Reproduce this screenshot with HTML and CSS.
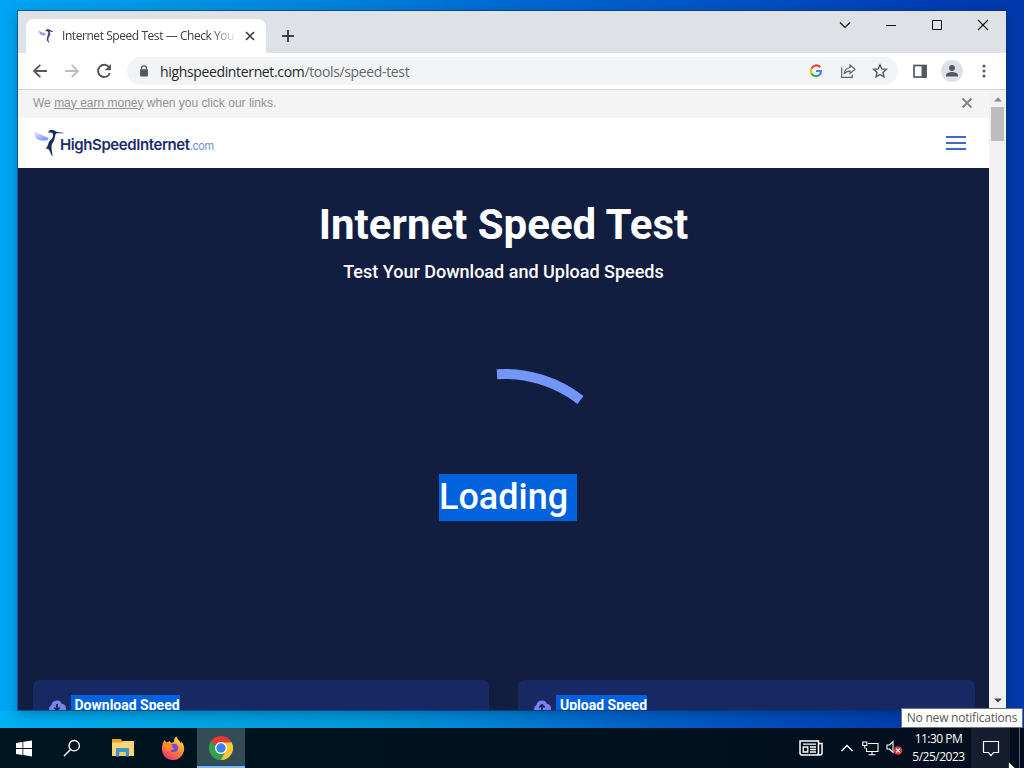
FILE: index.html
```html
<!DOCTYPE html>
<html lang="en">
<head>
	<meta charset="utf-8">
	<title>Internet Speed Test</title>
	<link rel="stylesheet" href="styles.css">
</head>
<body>
<div class="desktop">

	<div class="window">
		<div class="tabstrip">
			<div class="tab">
				<svg class="favicon" width="16" height="16" viewBox="0 0 16 16"><path d="M1 2.500c2 2 4 1.500 7 3L7 7.500c-3 .5-6-1-6-5z" fill="#9fa2ea"/><path d="M7.500 3c1-2 3-2 4-1l3.500 1.500-3-.2c-1 1.200 1 3.200-1 5.200-1 2-1.500 3 0 6-2-1.500-2.500-3.500-1.500-5.500C10 6.500 11 5 10 3.500c-1-1-2-.8-2.500-.5z" fill="#343b72" stroke="#343b72" stroke-width=".5"/></svg>
				<span class="tab-title">Internet Speed Test — Check You</span>
				<svg class="tab-close" width="10" height="10" viewBox="0 0 10 10"><path d="M1 1l8 8M9 1l-8 8" stroke="#3c4043" stroke-width="1.7"/></svg>
			</div>
			<svg class="newtab" width="14" height="14" viewBox="0 0 14 14"><path d="M7 1v12M1 7h12" stroke="#3c4043" stroke-width="1.9"/></svg>
			<div class="win-buttons">
				<svg width="12" height="12" viewBox="0 0 12 12"><path d="M1 3.500l5 5 5-5" fill="none" stroke="#111" stroke-width="1.200"/></svg>
				<svg width="12" height="12" viewBox="0 0 12 12"><path d="M1 6.500h10" stroke="#111"/></svg>
				<svg width="12" height="12" viewBox="0 0 12 12"><path d="M1.500 1.500h9v9h-9z" fill="none" stroke="#111"/></svg>
				<svg width="12" height="12" viewBox="0 0 12 12"><path d="M1 1l10 10M11 1L1 11" stroke="#111" stroke-width="1.100"/></svg>
			</div>
		</div>

		<div class="toolbar">
			<svg class="nav" width="16" height="16" viewBox="0 0 16 16"><path d="M15 8H2.500M8.300 1.800L2 8l6.300 6.200" fill="none" stroke="#54585c" stroke-width="1.800"/></svg>
			<svg class="nav" width="16" height="16" viewBox="0 0 16 16"><path d="M1 8h12.500M7.700 1.800L14 8l-6.300 6.200" fill="none" stroke="#babcbe" stroke-width="1.800"/></svg>
			<svg class="nav" width="16" height="16" viewBox="0 0 16 16"><path d="M13 4.200A6.100 6.100 0 1 0 13.900 10" fill="none" stroke="#54585c" stroke-width="2"/><path d="M15 1v6.300H8.700z" fill="#54585c"/></svg>
			<div class="omnibox">
				<svg class="lock" width="10" height="12" viewBox="0 0 10 12"><path d="M2.500 5V3.300a2.500 2.500 0 0 1 5 0V5" fill="none" stroke="#54585c" stroke-width="1.300"/><rect x="1" y="4.300" width="8" height="7.200" rx="1" fill="#54585c"/></svg>
				<span class="url">highspeedinternet.com<span>/tools/speed-test</span></span>
				<svg class="obicon" width="16" height="16" viewBox="0 0 16 16"><g fill="none" stroke-width="2.200"><path d="M12.200 4.200A5.200 5.200 0 0 0 3.500 5.600" stroke="#ea4335"/><path d="M3.500 5.600a5.200 5.200 0 0 0 0 4.800" stroke="#fbbc05"/><path d="M3.500 10.400a5.200 5.200 0 0 0 7.800 1.600" stroke="#34a853"/><path d="M11.300 12A5.200 5.200 0 0 0 13 8H8" stroke="#4285f4"/></g></svg>
				<svg class="obicon" width="16" height="16" viewBox="0 0 16 16"><g fill="none" stroke="#5f6368" stroke-width="1.200"><path d="M1.700 4.500v9.800h10.600v-2.500"/><path d="M10 2l5 4.300-5 4.200V8.100C7.300 8 5.500 9 4.100 11 4.500 7.700 6.500 5 10 4.500z"/></g></svg>
				<svg class="obicon" width="16" height="16" viewBox="0 0 16 16"><path d="M8 1.900l1.850 4.050 4.450.45-3.300 3 .95 4.350L8 11.500l-3.950 2.250L5 9.400l-3.300-3 4.450-.45z" fill="none" stroke="#54585c" stroke-width="1.400"/></svg>
			</div>
			<svg class="panel-icon" width="16" height="16" viewBox="0 0 16 16"><rect x="2" y="2.500" width="12" height="11.500" fill="none" stroke="#54585c" stroke-width="1.700"/><path d="M9.500 2h5v13h-5z" fill="#54585c"/></svg>
			<span class="avatar"><svg width="14" height="14" viewBox="0 0 14 14"><circle cx="7" cy="4" r="2.900" fill="#545866"/><path d="M1 12.500V11c0-2 3.500-3 6-3s6 1 6 3v1.500z" fill="#545866"/></svg></span>
			<svg class="more" width="4" height="14" viewBox="0 0 4 14"><g fill="#54585c"><circle cx="2" cy="2" r="1.500"/><circle cx="2" cy="7" r="1.500"/><circle cx="2" cy="12" r="1.500"/></g></svg>
		</div>

		<div class="viewport">
			<div class="page">
				<div class="notice">
					<span>We <u>may earn money</u> when you click our links.</span>
					<svg width="12" height="12" viewBox="0 0 12 12"><path d="M1.500 1.500l9 9M10.500 1.500l-9 9" stroke="#888" stroke-width="2"/></svg>
				</div>
				<div class="site-header">
					<div class="logo">
						<svg width="32" height="30" viewBox="0 0 32 30"><defs><linearGradient id="wing" x1="0" y1="0" x2=".7" y2="1"><stop offset="0" stop-color="#eef1ff"/><stop offset="1" stop-color="#7b97f6"/></linearGradient></defs><path d="M1.500 2.500c2 3.500 7 3.500 14 7.500l-.5 1.800c-3 1.600-9 1-11.500-1.300C1.500 8.500 1.500 6 1.500 2.500z" fill="url(#wing)"/><path d="M15 4.600C16 1.500 19.500.8 22 3c2 1.200 5 1.200 9.500 1.900-3 .3-6 .2-8 .4-1.600 1.200-1.200 3.500-2 6-.8 2.500-2.600 4-2.900 6.200-.3 3.500.8 7 .9 11.500-2-3.300-2.300-6-4.100-8l-2.700-.5c1.700-1.500 2.300-3.500 2.800-5.500.8-2.600 3.500-3.500 4.300-6 .7-2.300.2-3.800-1.200-4.200-1.200-.4-2.500-.4-3.600-.2z" fill="#1d2b63"/></svg>
						<div class="brand">HighSpeedInternet<span>.com</span></div>
					</div>
					<div class="burger"><i></i><i></i><i></i></div>
				</div>
				<div class="hero">
					<h1>Internet Speed Test</h1>
					<h2>Test Your Download and Upload Speeds</h2>
					<svg class="spinner" width="258" height="50" viewBox="0 0 258 50"><path d="M122 9.200A124 124 0 0 1 205.500 35" fill="none" stroke="#7396fb" stroke-width="10"/></svg>
					<div class="loading">Loading</div>
					<div class="cards">
						<div class="card">
							<svg width="18" height="15" viewBox="0 0 18 15"><path d="M4.500 13.500a4 4 0 0 1-1-7.600A5.500 5.500 0 0 1 14 5a4.300 4.300 0 0 1 .5 8.500z" fill="#7b83e8"/><path d="M9 5v6M6.300 8.500L9 11.300l2.700-2.800" fill="none" stroke="#1a2863" stroke-width="1.800"/></svg>
							<span>Download Speed</span>
						</div>
						<div class="card">
							<svg width="18" height="15" viewBox="0 0 18 15"><path d="M4.500 13.500a4 4 0 0 1-1-7.600A5.500 5.500 0 0 1 14 5a4.300 4.300 0 0 1 .5 8.500z" fill="#7b83e8"/><path d="M9 12V6M6.300 8.500L9 5.700l2.700 2.800" fill="none" stroke="#1a2863" stroke-width="1.800"/></svg>
							<span>Upload Speed</span>
						</div>
					</div>
				</div>
			</div>
			<div class="scrollbar">
				<svg width="8" height="5" viewBox="0 0 8 5"><path d="M0 4.500L4 .5l4 4z" fill="#868686"/></svg>
				<div class="thumb"></div>
				<svg class="down" width="8" height="5" viewBox="0 0 8 5"><path d="M0 .5l4 4 4-4z" fill="#4a4a4a"/></svg>
			</div>
		</div>
	</div>

	<div class="glow"></div>

	<div class="taskbar">
		<div class="task"><svg width="16" height="17" viewBox="0 0 16 17"><path d="M0 2.900l6.500-1V8H0zM7.300 1.800L16 .5V8H7.300zM0 8.900h6.500V15L0 14.100zM7.300 8.900H16v7.500l-8.700-1.300z" fill="#fff"/></svg></div>
		<div class="task"><svg width="18" height="18" viewBox="0 0 18 18"><circle cx="11.200" cy="6.700" r="5.200" fill="none" stroke="#fff" stroke-width="1.400"/><path d="M7.500 10.500L1 17" stroke="#fff" stroke-width="1.400"/></svg></div>
		<div class="task explorer"><svg width="24" height="20" viewBox="0 0 24 20"><path d="M1 1h9l1 2h11v4H1z" fill="#e2a42e"/><path d="M1 4.500h10l1.500-1.500H23v15H1z" fill="#fad475"/><path d="M5 18.500v-7.500q0-1 1-1h11q1 0 1 1v7.500h-3.500V14h-6v4.500z" fill="#3d95c6"/><path d="M8.500 14h6v4h-6z" fill="#f3cb68"/></svg></div>
		<div class="task"><svg width="24" height="24" viewBox="0 0 24 24"><defs><linearGradient id="fox" x1=".8" y1="0" x2=".3" y2="1"><stop offset="0" stop-color="#ffe14a"/><stop offset=".45" stop-color="#ff9632"/><stop offset="1" stop-color="#f5316b"/></linearGradient></defs><path d="M3.500 4l2 2.500L9 5l1 2 3-1c0-3 1-5 2.500-5.500.5 3 3.500 4 4.500 7l.5-2c3 4 3.500 8 1.500 12a11 11 0 0 1-20.500-1C0 12 1.500 7 3.500 4z" fill="url(#fox)"/><path d="M8 8.500c3 .5 4-1.500 7-.5 3 2 3 5.500.500 7.500-3.500 1.500-6.500.5-7.500-2l3 .5 2-2-4-.5z" fill="#7a4bc9"/><path d="M5.500 7l4.500 1.500 2 2.500-3.500 1.500 2 2.500c-4 1-7-3-5-8z" fill="#ff8a2a"/></svg></div>
		<div class="task active"><svg width="24" height="24" viewBox="0 0 24 24"><path d="M12 12L1.600 6A12 12 0 0 1 22.400 6z" fill="#e33b2e"/><path d="M12 12L22.400 6A12 12 0 0 1 12 24z" fill="#fcc934"/><path d="M12 12v12A12 12 0 0 1 1.600 6z" fill="#31a350"/><path d="M12 6.500h10.600L16.800 14.800z" fill="#fcc934"/><path d="M16.800 14.800L12 24l-1-6.500z" fill="#31a350"/><circle cx="12" cy="12" r="6" fill="#fff"/><circle cx="12" cy="12" r="4.700" fill="#4080ee"/></svg></div>
		<div class="tray">
			<svg class="news" width="24" height="16" viewBox="0 0 24 16"><g fill="none" stroke="#fff" stroke-width="1.500"><path d="M19.500 15H3a2 2 0 0 1-2-2V1h18.500v12.500M19.500 3.500H23V13a2 2 0 0 1-4 0"/><path d="M4.200 7h4.600v5H4.200zM4 4.200h13M11 7h6M11 9.500h6M11 12h6" stroke-width="1.300"/></g></svg>
			<svg class="up" width="14" height="8" viewBox="0 0 14 8"><path d="M1.500 7L7 1.500 12.500 7" fill="none" stroke="#fff" stroke-width="1.400"/></svg>
			<svg class="net" width="17" height="15" viewBox="0 0 17 15"><g fill="none" stroke="#fff" stroke-width="1.100"><path d="M6 2.500h10v8H4.500V7M.8 1h4v3.500h-4zM2.800 4.500v3M10 10.500v3M6.500 13.700h7"/></g></svg>
			<svg class="sound" width="17" height="16" viewBox="0 0 17 16"><path d="M7 12.500v-11L3.500 5H1v4h2.500z" fill="none" stroke="#fff" stroke-width="1.100"/><circle cx="12" cy="10.500" r="4.300" fill="#d93a41"/><path d="M10.200 8.700l3.600 3.600M13.800 8.700l-3.600 3.600" stroke="#fff" stroke-width="1.200"/></svg>
			<div class="clock"><span>11:30 PM</span><span>5/25/2023</span></div>
			<div class="action"><svg width="18" height="17" viewBox="0 0 18 17"><path d="M1.500 1.500h15v11h-5L9 15.500l-2.500-3h-5z" fill="none" stroke="#fff" stroke-width="1.200"/></svg></div>
			<div class="peek"></div>
		</div>
	</div>

	<div class="tooltip">No new notifications</div>
	<svg class="cursor" width="12" height="19" viewBox="0 0 12 19"><path d="M.5.5v16l4-4 3 6 2-1-2.500-5.500H12z" fill="#fff" stroke="#000" stroke-width=".6"/></svg>
</div>
</body>
</html>
```

FILE: styles.css
```css
* {
	box-sizing: border-box;
}

body {
	margin: 0;
	font-family: "Open Sans", "Noto Sans", sans-serif;
}

svg {
	display: block;
	flex: none;
}

.desktop {
	position: relative;
	width: 1024px;
	height: 768px;
	overflow: hidden;
	display: flex;
	flex-direction: column;
	justify-content: flex-end;
	background: linear-gradient(90deg, #00a5f5 0, #0098e8 150px, #0083dc 330px, #0067cf 530px, #0052c2 740px, #003eb5 920px, #0038ac 1024px);
}

/* browser window */
.window {
	position: absolute;
	left: 18px;
	top: 11px;
	width: 988px;
	height: 699px;
	display: flex;
	flex-direction: column;
	background: #fff;
	box-shadow: 0 0 0 1px rgba(10, 50, 100, .55), 0 4px 12px rgba(0, 20, 60, .35);
}

.tabstrip {
	display: flex;
	height: 42px;
	flex: none;
	background: #dee1e6;
	padding: 8px 0 0 8px;
}

.tab {
	display: flex;
	align-items: center;
	width: 240px;
	height: 34px;
	padding: 0 11px 0 12px;
	background: #fff;
	border-radius: 8px 8px 0 0;
}

.tab-title {
	width: 176px;
	margin: -1px 0 0 8px;
	overflow: hidden;
	white-space: nowrap;
	font-size: 12px;
	letter-spacing: -0.44px;
	color: #3c4043;
	-webkit-mask-image: linear-gradient(90deg, #000 150px, transparent 175px);
	mask-image: linear-gradient(90deg, #000 150px, transparent 175px);
}

.tab-close {
	margin-left: 7px;
}

.newtab {
	margin: 10px 0 0 15px;
}

.win-buttons {
	display: flex;
	gap: 34px;
	margin: 0 17px 0 auto;
}

.toolbar {
	display: flex;
	align-items: center;
	height: 36px;
	flex: none;
	padding-left: 14px;
}

.nav {
	margin-right: 16px;
}

.omnibox {
	display: flex;
	align-items: center;
	width: 771px;
	height: 28px;
	margin-left: -1px;
	padding: 0 10px 0 12px;
	border-radius: 14px;
	background: #f1f3f4;
}

.url {
	margin: 0 auto 0 11px;
	font-size: 14px;
	letter-spacing: -0.35px;
	color: #26282b;
}

.url span {
	color: #65696d;
}

.obicon {
	margin-left: 16px;
}

.panel-icon {
	margin-left: 14px;
}

.avatar {
	display: flex;
	align-items: center;
	justify-content: center;
	width: 22px;
	height: 22px;
	margin-left: 13px;
	border-radius: 50%;
	background: #dfe1e8;
}

.more {
	margin-left: 19px;
}

/* page */
.viewport {
	display: flex;
	flex: 1;
	min-height: 0;
	border-top: 1px solid #d5d6d8;
}

.page {
	display: flex;
	flex-direction: column;
	width: 971px;
	overflow: hidden;
	font-family: Roboto, sans-serif;
}

.notice {
	display: flex;
	align-items: center;
	justify-content: space-between;
	height: 28px;
	flex: none;
	padding: 0 16px 3px 15px;
	background: #f4f4f4;
	color: #929292;
	font: 12px "Liberation Sans", Arial, sans-serif;
}

.site-header {
	display: flex;
	align-items: center;
	justify-content: space-between;
	height: 50px;
	flex: none;
	padding: 0 23px 0 15px;
}

.logo {
	display: flex;
	align-items: center;
	font-family: Inter, sans-serif;
}

.logo svg {
	margin-right: -5px;
}

.brand {
	padding-top: 2px;
	font-size: 15px;
	font-weight: 600;
	letter-spacing: -0.41px;
	color: #1f2c6b;
}

.brand span {
	font-size: 11px;
	font-weight: 400;
	letter-spacing: -0.4px;
	color: #6e8ce0;
}

.burger {
	display: flex;
	flex-direction: column;
	gap: 4px;
}

.burger i {
	width: 20px;
	height: 2px;
	background: #4466cf;
}

.hero {
	display: flex;
	flex-direction: column;
	align-items: center;
	flex: 1;
	min-height: 0;
	background: #111e40;
	color: #fff;
}

.hero h1 {
	margin: 32px 0 0;
	font-size: 42px;
	line-height: 50px;
	font-weight: 700;
}

.hero h2 {
	margin: 10px 0 0;
	font-size: 18px;
	line-height: 24px;
	font-weight: 500;
}

.spinner {
	margin-top: 81px;
}

.loading {
	width: 138px;
	height: 47px;
	margin: 59px 0 0 9px;
	flex: none;
	background: #0062dc;
	font-size: 36px;
	line-height: 47px;
	font-weight: 500;
}

.cards {
	display: flex;
	gap: 29px;
	width: 942px;
	margin-top: 159px;
}

.card {
	display: flex;
	align-items: flex-start;
	flex: 1;
	height: 120px;
	padding: 15px;
	border-radius: 6px;
	background: #182862;
}

.card svg {
	margin-top: 4px;
}

.card span {
	height: 20px;
	margin-left: 5px;
	padding-left: 4px;
	background: #0062dc;
	font-size: 14px;
	line-height: 20px;
	font-weight: 700;
}

.scrollbar {
	display: flex;
	flex-direction: column;
	align-items: center;
	width: 17px;
	padding: 7px 0;
	background: #f1f1f1;
}

.thumb {
	width: 13px;
	height: 34px;
	margin-top: 5px;
	background: #bdbdbd;
}

.scrollbar .down {
	margin-top: auto;
}

/* lighter wallpaper strip above the taskbar */
.glow {
	height: 17px;
	background: linear-gradient(90deg, #00b0f4 0, #00a6e4 200px, #009add 370px, #0082d6 500px, #0066cc 620px, #0050be 760px, #003eaf 900px, #0038a8 1024px);
}

/* taskbar */
.taskbar {
	display: flex;
	height: 40px;
	background: linear-gradient(90deg, #00151f, #00131f 50%, #030d1e);
	color: #fff;
}

.task {
	display: flex;
	align-items: center;
	justify-content: center;
	width: 48px;
}

.explorer {
	width: 53px;
}

.active {
	border-bottom: 2px solid #76b9ed;
	padding-top: 2px;
	background: #344c57;
}

.tray {
	display: flex;
	align-items: center;
	margin-left: auto;
}

.up {
	margin-left: 17px;
}

.net {
	margin-left: 8px;
}

.sound {
	margin-left: 7px;
}

.clock {
	display: flex;
	flex-direction: column;
	align-items: center;
	width: 68px;
	padding-left: 3px;
	font-size: 12px;
	line-height: 18px;
	letter-spacing: -0.5px;
}

.action {
	display: flex;
	align-items: center;
	justify-content: center;
	width: 39px;
	height: 40px;
	background: #151d2e;
}

.peek {
	width: 14px;
	height: 40px;
	background: linear-gradient(90deg, transparent 9px, #59616d 9px, #59616d 10px, transparent 10px);
}

.tooltip {
	position: absolute;
	left: 901px;
	top: 708px;
	width: 122px;
	height: 20px;
	border: 1px solid #6b7280;
	background: #fff;
	color: #575757;
	font-size: 12px;
	line-height: 17px;
	letter-spacing: -0.22px;
	text-align: center;
	white-space: nowrap;
}

.cursor {
	position: absolute;
	left: 1008px;
	top: 761px;
}
```
